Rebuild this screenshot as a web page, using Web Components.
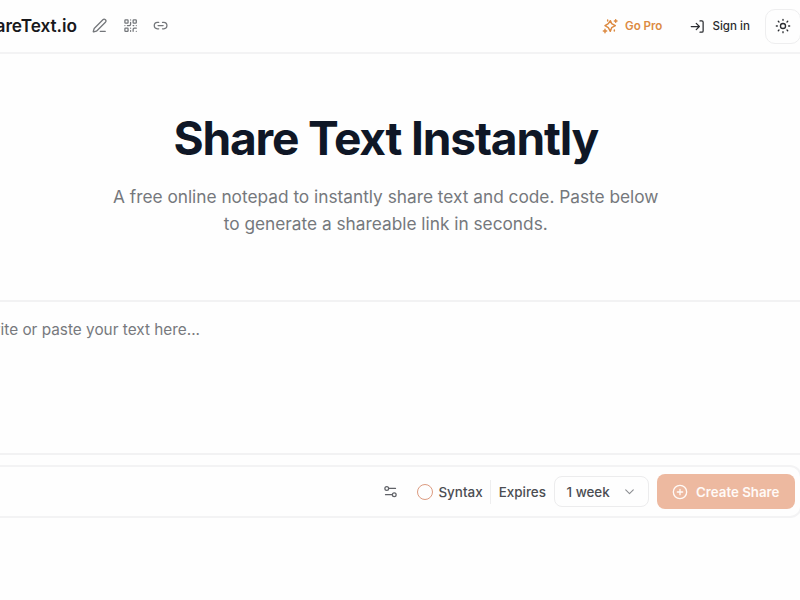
<!DOCTYPE html>
<html lang="en">
<head>
<meta charset="utf-8">
<title>ShareText.io</title>
<style>
html,body{margin:0;height:100%;overflow:hidden;background:#fefefe}
body{font-family:Inter,"Liberation Sans",sans-serif;color:#33363b}
</style>
</head>
<body>
<share-page></share-page>
<script>
const ICONS = {
  pen:'<path d="M13 21h8"/><path d="M21.17 6.81a2.8 2.8 0 0 0-3.98-3.98L3.84 16.17a2 2 0 0 0-.5.83l-1.32 4.35a.5.5 0 0 0 .62.62l4.35-1.32a2 2 0 0 0 .83-.5z"/>',
  qr:'<rect width="5" height="5" x="3" y="3" rx="1"/><rect width="5" height="5" x="16" y="3" rx="1"/><rect width="5" height="5" x="3" y="16" rx="1"/><path d="M21 16h-3a2 2 0 0 0-2 2v3M21 21v.01M12 7v3a2 2 0 0 1-2 2H7M3 12h.01M12 3h.01M12 16v.01M16 12h1M21 12v.01M12 21v-1"/>',
  link:'<path d="M9 17H7A5 5 0 0 1 7 7h2M15 7h2a5 5 0 1 1 0 10h-2M8 12h8"/>',
  sparkles:'<path d="M12.500 4 14.500 8.500 20 11.500 14.500 14.500 12.500 20 9.500 14.500 4.500 11.500 9.500 8.500z"/><path d="M20.500 2.500v4M18.500 4.500h4M4.500 17v5M2 19.500h5M8.500 3v1.500M18.500 18v1.500"/>',
  login:'<path d="M2 12h13M10 7l5 5-5 5M16 3h3a2 2 0 0 1 2 2v14a2 2 0 0 1-2 2h-3"/>',
  sun:'<circle cx="12" cy="12" r="3.800"/><path d="M12 2v1.500M12 20.500v1.500M4.930 4.930l1.060 1.060M18.010 18.010l1.060 1.060M2 12h1.500M20.500 12h1.500M5.990 18.010l-1.060 1.060M19.070 4.930l-1.060 1.060"/>',
  sliders:'<circle cx="6" cy="7" r="3"/><path d="M9 7h11M4 17h10"/><circle cx="18" cy="17" r="3"/>',
  chevron:'<path d="m5 9 7 7 7-7"/>',
  plus:'<circle cx="12" cy="12" r="10"/><path d="M8 12h8M12 8v8"/>'
};
function define(name, html, setup){
  const t = document.createElement('template');
  t.innerHTML = html;
  customElements.define(name, class extends HTMLElement{
    constructor(){ super(); this.attachShadow({mode:'open'}).append(t.content.cloneNode(true)); }
    connectedCallback(){ if(setup) setup(this); }
  });
}
define('ui-icon',
  '<style>:host{display:block;flex:none;width:var(--size,16px);height:var(--size,16px)}svg{display:block;width:100%;height:100%;fill:none;stroke:currentColor;stroke-width:var(--stroke,2);stroke-linecap:round;stroke-linejoin:round}</style><svg viewBox="0 0 24 24"></svg>',
  el => { el.shadowRoot.querySelector('svg').innerHTML = ICONS[el.getAttribute('name')]; });

define('site-header', `<style>
:host{display:flex;align-items:center;height:52px;border-bottom:2px solid #f3f3f4;color:#2a2c30}
.brand{width:77px;display:flex;justify-content:flex-end;white-space:nowrap;font-size:17.300px;line-height:24px;font-weight:600;letter-spacing:-.050px;color:#18181c}
nav{display:flex;gap:15.500px;margin-left:15px;color:#73767a;--stroke:2;--size:15.200px}
.actions{display:flex;align-items:center;margin-left:auto;font-size:11.550px;font-weight:500;line-height:16px;white-space:nowrap;--size:16px}
.pro{display:flex;align-items:center;gap:7px;color:#dc8a42;width:88px;font-weight:600;--stroke:2.200}
.sign{display:flex;align-items:center;gap:7.500px;width:75px;--size:15px}
.theme{box-sizing:border-box;width:36px;height:35px;border:1px solid #eeeeef;border-radius:10px;display:grid;place-items:center;margin-right:-1px}
</style>
<div class="brand"><span>areText.io</span></div>
<nav><ui-icon name="pen"></ui-icon><ui-icon name="qr"></ui-icon><ui-icon name="link"></ui-icon></nav>
<div class="actions"><div class="pro"><ui-icon name="sparkles"></ui-icon><span>Go Pro</span></div><div class="sign"><ui-icon name="login"></ui-icon><span>Sign in</span></div><div class="theme"><ui-icon name="sun"></ui-icon></div></div>`);

define('page-hero', `<style>
:host{display:block;box-sizing:border-box;height:246px;width:771.500px;padding-top:60px;text-align:center}
h1{margin:0;font-size:46.100px;line-height:48px;letter-spacing:-1.180px;font-weight:700;color:#0f1726;white-space:nowrap}
p{margin:21px 0 0;font-size:17.270px;line-height:27px;color:#75787c;white-space:nowrap}
</style><h1>Share Text Instantly</h1><p>A free online notepad to instantly share text and code. Paste below<br>to generate a shareable link in seconds.</p>`);

define('text-editor', `<style>
:host{display:block;box-sizing:border-box;height:155px;border:solid #f2f2f3;border-width:2px 0;padding:15px 0 0}
div{width:200px;display:flex;justify-content:flex-end;white-space:nowrap;font-size:15.350px;line-height:26px;color:#77797d}
</style><div><span>rite or paste your text here...</span></div>`);

define('share-toolbar', `<style>
:host{display:flex;align-items:center;box-sizing:border-box;width:802px;height:53px;margin-top:10px;padding-right:5px;border:2px solid #f3f3f4;border-left:0;border-radius:0 12px 12px 0;justify-content:flex-end;font-size:13.450px;font-weight:500;line-height:20px;color:#4b4d52;white-space:nowrap}
.settings{--size:15px;margin-right:19px;color:#606267}
.ring{box-sizing:border-box;width:16px;height:16px;border:1.400px solid #dc9b80;border-radius:50%;margin-right:5.500px}
.rule{width:1px;height:24px;background:#eeeeef;margin:0 8px 0 7px}
.select{box-sizing:border-box;display:flex;align-items:center;justify-content:space-between;width:95px;height:31px;border:1px solid #ececed;border-radius:8px;padding:0 12px 0 11.500px;margin:0 8px 0 8px;font-size:13.400px;--size:13px}
.select ui-icon{color:#8c8e92}
button{box-sizing:border-box;display:flex;align-items:center;gap:8px;width:138px;height:35px;margin:0;padding:0 15px;border:0;border-radius:8px;background:#edb9a0;color:#fffaf7;font:600 13.300px/20px Inter,"Liberation Sans",sans-serif;white-space:nowrap;--size:16px}
</style>
<ui-icon class="settings" name="sliders"></ui-icon><i class="ring"></i><span>Syntax</span><i class="rule"></i><span>Expires</span><div class="select"><span>1 week</span><ui-icon name="chevron"></ui-icon></div><button><ui-icon name="plus"></ui-icon><span>Create Share</span></button>`);

define('share-page', `<style>:host{display:flex;flex-direction:column;width:800px;height:600px;overflow:hidden;background:#fefefe}</style>
<site-header></site-header><page-hero></page-hero><text-editor></text-editor><share-toolbar></share-toolbar>`);
</script>
</body>
</html>
